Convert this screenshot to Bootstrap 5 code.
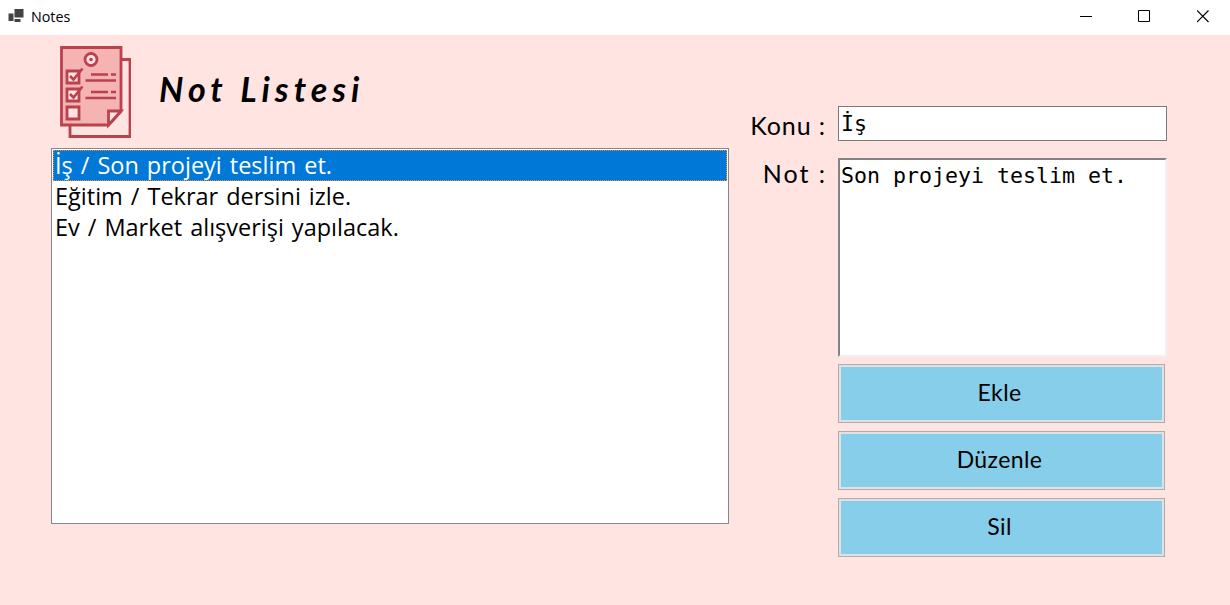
<!DOCTYPE html>
<html lang="tr">
<head>
<meta charset="utf-8">
<title>Notes</title>
<link href="https://cdn.jsdelivr.net/npm/bootstrap@5.3.0/dist/css/bootstrap.min.css" rel="stylesheet">
<style>
body{background:#ffe4e1;color:#000;height:100vh;overflow:hidden}
.titlebar{height:35px;font:14.3px/33px "Segoe UI","Open Sans",sans-serif}
.titlebar .app-name{margin:-2px 0 0 7px}
.titlebar .app-icon{margin:-3px 0 0 8px}
.titlebar .caption-btns{gap:46px;padding-right:20px;margin-top:-3px}
.workspace{padding-left:51px}
.pane-list{width:678px}
.pane-form{width:438px;padding-top:71px}
.list-head{height:113px}
.list-head svg{margin:9px 0 0 7px}
.list-head h1{font:italic bold 34px/40px "Lucida Handwriting",Lato,sans-serif;letter-spacing:5px;margin:34px 0 0 28px}
.notes{height:376px;border:1px solid #828790;padding:1px;background:#fff;border-radius:0}
.notes .list-group-item{height:31px;padding:0 2px;border:0;border-radius:0;color:#000;font:23.5px/30px "Comic Sans MS","Open Sans",sans-serif;word-spacing:1.9px;white-space:pre}
.notes .list-group-item.active{background:#0078d7;color:#fff;outline:1px dotted #ff8728;outline-offset:-1px;margin:0}
.caption-text{width:109px;padding-right:12px;font:25px/30px "Ink Free",Lato,sans-serif;text-align:right;letter-spacing:.9px}
.caption-note{letter-spacing:2px;padding-right:11px}
.field{font:21.6px/30px "DejaVu Sans Mono",monospace!important;color:#000!important;background:#fff;border-radius:0;padding:0 2px;resize:none}
.topic{width:329px;height:35px;border:1px solid #7a7a7a}
.note-row{margin-top:17px}
.body-text{width:329px;height:199px;border:2px solid;border-color:#838383 #f1f1f1 #f1f1f1 #838383;padding:1px 1px 0;overflow:hidden}
.actions{margin:7px 0 0 109px;width:327px;gap:8px}
.action{height:59px;border-radius:0;border:1px solid #adadad;box-shadow:inset 0 0 0 2px #e1e1e1;background:#87ceeb;color:#000;font:23px/30px "Ink Free",Lato,sans-serif;padding:0 4px 3px 0;letter-spacing:.4px}
.action:hover{background:#87ceeb;border-color:#adadad}
</style>
</head>
<body>
<header class="titlebar bg-white d-flex align-items-center">
  <svg class="app-icon" width="16" height="16" viewBox="0 0 16 16"><path fill="#434343" d="M.500 5.500h5v7.500h-5zM6.500 1h9v8.500h-9zM6.500 11h6v3h-6z"/></svg>
  <span class="app-name">Notes</span>
  <div class="caption-btns d-flex ms-auto align-items-center">
    <svg width="13" height="13" viewBox="0 0 13 13"><path d="M1 6.500h12" stroke="#000"/></svg>
    <svg width="13" height="13" viewBox="0 0 13 13"><path d="M.5.5h11v11H.5z" fill="none" stroke="#000"/></svg>
    <svg width="13" height="13" viewBox="0 0 13 13"><path d="M0 .5l11.500 11.500M11.500.5l-11.500 11.500" stroke="#000" stroke-width="1.1"/></svg>
  </div>
</header>
<main class="workspace d-flex align-items-start">
  <section class="pane-list">
    <div class="list-head d-flex align-items-start">
      <svg width="73" height="95" viewBox="59 44 73 95" fill="none" stroke="#b9424f" stroke-width="2.8">
        <path d="M71 125v11.500h60V59.500h-8"/>
        <path d="M62.500 47.500h59.500v64l-12.500 13.500h-47z" fill="#f5b3b2"/>
        <path d="M122 111h-12.500v14z" fill="#ffe4e1"/>
        <circle cx="92" cy="59.500" r="6" fill="#ffe4e1"/><circle cx="92" cy="59.500" r="1.800" fill="#b9424f" stroke="none"/>
        <path d="M68 71h12v12H68zM68 89h12v12H68zM68 107h12v12H68z" fill="#ffe4e1"/>
        <path d="M71 76l3.500 3.500 9-11M71 94l3.500 3.500 9-11M92 74.500h17M112 74.500h5M86.500 80.500H117M92 92h17M112 92h5M86.500 98H117" stroke-width="2.600"/>
      </svg>
      <h1>Not Listesi</h1>
    </div>
    <div class="notes list-group">
      <div class="list-group-item active">İş / Son projeyi teslim et.</div>
      <div class="list-group-item">Eğitim / Tekrar dersini izle.</div>
      <div class="list-group-item">Ev / Market alışverişi yapılacak.</div>
    </div>
  </section>
  <section class="pane-form">
    <div class="d-flex">
      <label class="caption-text pt-1" for="topic">Konu :</label>
      <input class="field topic form-control" id="topic" value="İş">
    </div>
    <div class="note-row d-flex">
      <label class="caption-text caption-note" for="note">Not :</label>
      <textarea class="field body-text form-control" id="note">Son projeyi teslim et.</textarea>
    </div>
    <div class="actions d-flex flex-column">
      <button class="btn action">Ekle</button>
      <button class="btn action">Düzenle</button>
      <button class="btn action">Sil</button>
    </div>
  </section>
</main>
<script src="https://cdn.jsdelivr.net/npm/bootstrap@5.3.0/dist/js/bootstrap.bundle.min.js"></script>
</body>
</html>
